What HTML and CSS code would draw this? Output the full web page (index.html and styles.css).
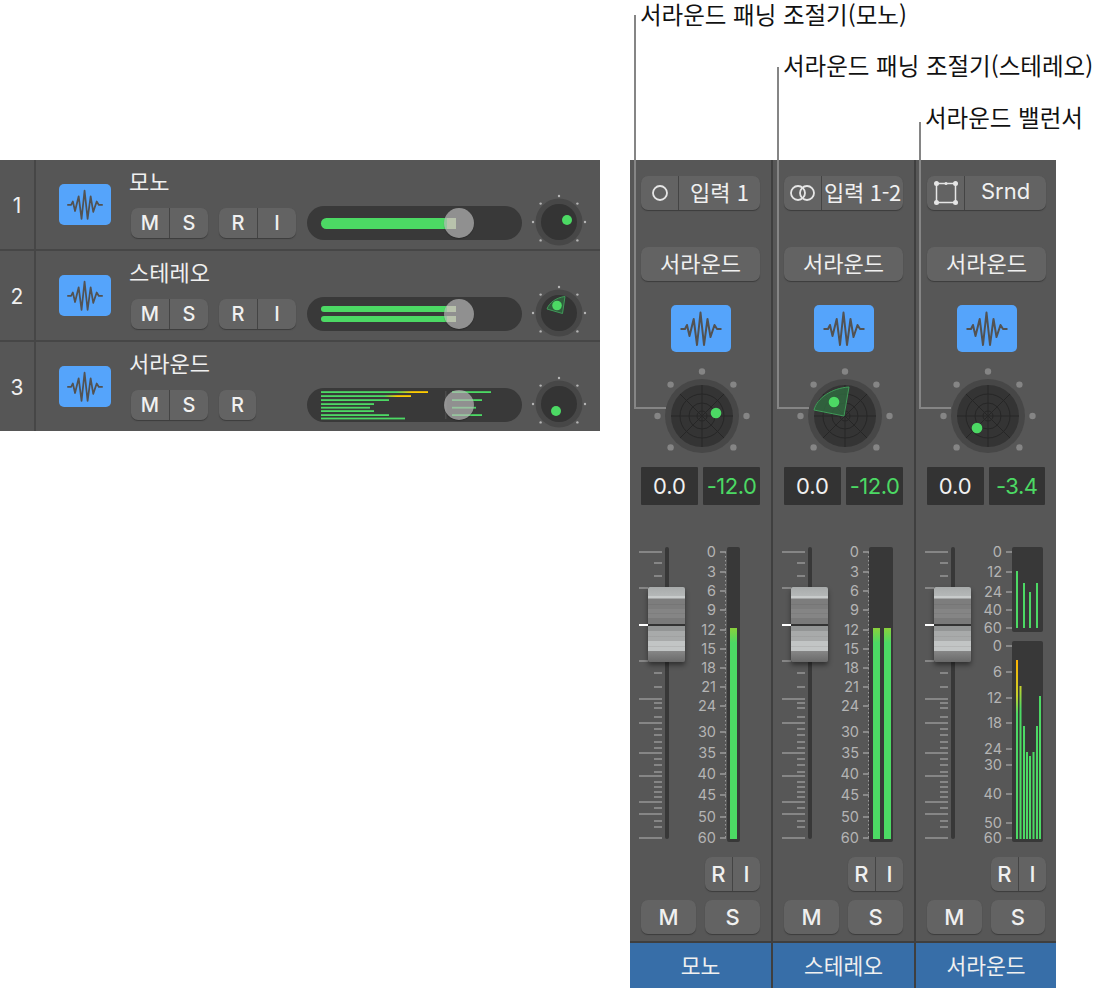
FILE: index.html
```html
<!DOCTYPE html>
<html lang="ko">
<head>
    <meta charset="UTF-8">
    <title>서라운드 패닝</title>
    <link rel="stylesheet" href="styles.css">
</head>
<body>
    <!-- shared icons -->
    <svg class="sprite" width="0" height="0">
        <defs>
            <symbol id="wave" viewBox="0 0 60 47">
                <path d="M9.500 24H14l2-4 2.500 11 4.200-17L26 40l3.500-32.500L33 40l3.500-26 3 18 4-12 2.500 4h4.500" fill="none" stroke="#525252" stroke-width="2" stroke-linejoin="round"/>
            </symbol>
            <symbol id="small-knob" viewBox="0 0 60 60">
                <circle cx="30" cy="30" r="23.500" fill="#474747"/>
                <circle cx="30" cy="30" r="18" fill="#343434"/>
                <g fill="#b5b5b5">
                    <circle cx="30" cy="4" r="1.200"/><circle cx="11.600" cy="11.600" r="1.200"/><circle cx="48.400" cy="11.600" r="1.200"/>
                    <circle cx="4" cy="30" r="1.200"/><circle cx="56" cy="30" r="1.200"/><circle cx="11.600" cy="48.400" r="1.200"/>
                    <circle cx="48.400" cy="48.400" r="1.200"/>
                </g>
            </symbol>
            <symbol id="big-knob" viewBox="0 0 100 100">
                <circle cx="50" cy="50" r="37" fill="#474747"/>
                <circle cx="50" cy="50" r="31" fill="#343434"/>
                <g fill="none" stroke="#262626" stroke-width="1">
                    <circle cx="50" cy="50" r="22"/><circle cx="50" cy="50" r="13"/><circle cx="50" cy="50" r="5"/>
                    <path d="M19 50h62M50 19v62M28 28l44 44M72 28l-44 44"/>
                </g>
                <g fill="#858585">
                    <circle cx="50" cy="5.500" r="3.200"/><circle cx="18.600" cy="18.600" r="3.200"/><circle cx="81.400" cy="18.600" r="3.200"/>
                    <circle cx="5.500" cy="50" r="3.200"/><circle cx="94.500" cy="50" r="3.200"/><circle cx="18.600" cy="81.400" r="3.200"/>
                    <circle cx="81.400" cy="81.400" r="3.200"/>
                </g>
            </symbol>
            <symbol id="fader-ticks" viewBox="0 0 60 300">
                <path d="M9 5h23M24 16h8M24 29h8M9 41h9M9 114h9M24 126h8M24 140h8M9 152h23M24 156h8M24 161h8M24 170h8M9 176h23M24 182h8M24 188h8M24 195h8M24 201h8M9 206h23M24 212h8M24 218h8M24 225h8M9 229h23M24 235h8M24 240h8M24 245h8M24 250h8M9 255h23M24 261h8M9 267h23M24 274h8M24 280h8M9 291h23" stroke="#969696" stroke-width="1.400" fill="none"/>
                <rect x="35" y="0" width="4" height="292" rx="2" fill="#383838"/>
            </symbol>
            <linearGradient id="meter-mono" x1="0" x2="0" y1="0" y2="1">
                <stop offset="0" stop-color="#8ad13c"/><stop offset=".07" stop-color="#4cd964"/>
            </linearGradient>
            <linearGradient id="meter-hot" x1="0" x2="0" y1="0" y2="1">
                <stop offset="0" stop-color="#ffb400"/><stop offset=".2" stop-color="#c8d12c"/><stop offset=".3" stop-color="#4cd964"/>
            </linearGradient>
            <linearGradient id="meter-yellow" x1="0" x2="0" y1="0" y2="1">
                <stop offset="0" stop-color="#c8d12c"/><stop offset=".15" stop-color="#4cd964"/>
            </linearGradient>
            <linearGradient id="hot" x1="0" x2="1" y1="0" y2="0">
                <stop offset=".7" stop-color="#4cd964"/><stop offset=".85" stop-color="#ffcc00"/>
            </linearGradient>
        </defs>
    </svg>

    <div class="page">
        <!-- track list -->
        <section class="tracks">
            <div class="track">
                <div class="track-num">1</div>
                <div class="track-icon"><svg width="52" height="41"><use href="#wave"/></svg></div>
                <div class="track-main">
                    <div class="track-name">모노</div>
                    <div class="track-btns">
                        <div class="seg seg-small"><span>M</span><span>S</span></div>
                        <div class="seg seg-small"><span>R</span><span>I</span></div>
                    </div>
                </div>
                <div class="slider">
                    <div class="level-col"><div class="level level-mono"></div></div>
                    <div class="thumb"></div>
                </div>
                <svg class="track-knob" width="60" height="60" viewBox="0 0 60 60">
                    <use href="#small-knob" width="60" height="60"/>
                    <circle cx="38" cy="28" r="5" fill="#4cd964"/>
                </svg>
            </div>
            <div class="track">
                <div class="track-num">2</div>
                <div class="track-icon"><svg width="52" height="41"><use href="#wave"/></svg></div>
                <div class="track-main">
                    <div class="track-name">스테레오</div>
                    <div class="track-btns">
                        <div class="seg seg-small"><span>M</span><span>S</span></div>
                        <div class="seg seg-small"><span>R</span><span>I</span></div>
                    </div>
                </div>
                <div class="slider">
                    <div class="level-col"><div class="level level-st"></div><div class="level level-st"></div></div>
                    <div class="thumb"></div>
                </div>
                <svg class="track-knob" width="60" height="60" viewBox="0 0 60 60">
                    <use href="#small-knob" width="60" height="60"/>
                    <path d="M36 13.500l-2.500 17-15.500-4.500c2-6 9-11.500 18-12.500z" fill="#2f6b40" fill-opacity=".75" stroke="#3f9a58" stroke-width="1"/>
                    <circle cx="28" cy="22.500" r="4.800" fill="#4cd964"/>
                </svg>
            </div>
            <div class="track">
                <div class="track-num">3</div>
                <div class="track-icon"><svg width="52" height="41"><use href="#wave"/></svg></div>
                <div class="track-main">
                    <div class="track-name">서라운드</div>
                    <div class="track-btns">
                        <div class="seg seg-small"><span>M</span><span>S</span></div>
                        <div class="seg seg-small seg-one"><span>R</span></div>
                    </div>
                </div>
                <div class="slider">
                    <svg class="surround-lines" width="215" height="33" viewBox="0 0 215 33">
                        <g fill="#4cd964">
                            <rect x="14" y="3.200" width="107" height="1.800" fill="url(#hot)"/>
                            <rect x="14" y="7.200" width="90" height="1.800" fill="url(#hot)"/>
                            <rect x="14" y="11.200" width="68" height="1.800"/>
                            <rect x="14" y="15.200" width="53" height="1.800"/>
                            <rect x="14" y="18.800" width="49" height="1.800"/>
                            <rect x="14" y="22.200" width="53" height="1.800"/>
                            <rect x="14" y="26.200" width="68" height="1.800"/>
                            <rect x="14" y="29.600" width="84" height="1.800"/>
                            <rect x="145" y="3.200" width="39" height="1.800"/>
                            <rect x="145" y="11.200" width="30" height="1.800"/>
                            <rect x="145" y="18.800" width="24" height="1.800"/>
                            <rect x="145" y="26.200" width="30" height="1.800"/>
                        </g>
                        <rect x="138" y="3" width="1.500" height="28" fill="#4a4a4a"/>
                    </svg>
                    <div class="thumb"></div>
                </div>
                <svg class="track-knob" width="60" height="60" viewBox="0 0 60 60">
                    <use href="#small-knob" width="60" height="60"/>
                    <circle cx="27" cy="37" r="5" fill="#4cd964"/>
                </svg>
            </div>
        </section>

        <!-- mixer channels -->
        <section class="mixer">
            <div class="strip">
                <div class="strip-body">
                    <div class="seg seg-io">
                        <span class="io-icon"><svg width="18" height="18" viewBox="0 0 18 18"><circle cx="9" cy="9" r="7" fill="none" stroke="#e6e6e6" stroke-width="1.800"/></svg></span>
                        <span class="io-label">입력 1</span>
                    </div>
                    <div class="btn-wide">서라운드</div>
                    <div class="strip-icon"><svg width="60" height="47"><use href="#wave"/></svg></div>
                    <svg class="strip-knob" width="100" height="100" viewBox="0 0 100 100">
                        <use href="#big-knob" width="100" height="100"/>
                        <circle cx="64" cy="47" r="5.300" fill="#4cd964"/>
                    </svg>
                    <div class="readouts"><div class="readout">0.0</div><div class="readout readout-level">-12.0</div></div>
                    <svg class="fader" width="120" height="300" viewBox="0 0 120 300">
                        <use href="#fader-ticks" y="2" width="60" height="300"/>
                        <rect x="97" y="2" width="13" height="295" rx="2" fill="#383838"/>
                        <rect x="100" y="83" width="7" height="211" fill="url(#meter-mono)"/>
                        <path d="M95.500 7v286" stroke="#9a9a9a" stroke-dasharray="1.500 2.500"/>
                        <path d="M90 7h6M90 27h6M90 46h6M90 65h6M90 85h6M90 104h6M90 123h6M90 142h6M90 161h6M90 187h6M90 208h6M90 229h6M90 250h6M90 272h6M90 293h6" stroke="#9a9a9a" stroke-width="1.300"/>
                        <g class="scale">
                            <text x="86" y="12">0</text><text x="86" y="32">3</text><text x="86" y="51">6</text><text x="86" y="70">9</text><text x="86" y="90">12</text><text x="86" y="109">15</text><text x="86" y="128">18</text><text x="86" y="147">21</text><text x="86" y="166">24</text><text x="86" y="192">30</text><text x="86" y="213">35</text><text x="86" y="234">40</text><text x="86" y="255">45</text><text x="86" y="277">50</text><text x="86" y="298">60</text>
                        </g>
                    </svg>
                    <div class="fader-cap"></div>
                    <div class="strip-btns">
                        <div class="seg seg-ri"><span>R</span><span>I</span></div>
                        <div class="ms-row"><div class="btn-ms">M</div><div class="btn-ms">S</div></div>
                    </div>
                </div>
                <div class="strip-name">모노</div>
            </div>
            <div class="strip">
                <div class="strip-body">
                    <div class="seg seg-io">
                        <span class="io-icon"><svg width="30" height="18" viewBox="0 0 30 18"><circle cx="10" cy="9" r="7" fill="none" stroke="#e6e6e6" stroke-width="1.800"/><circle cx="19" cy="9" r="7" fill="none" stroke="#e6e6e6" stroke-width="1.800"/></svg></span>
                        <span class="io-label">입력 1-2</span>
                    </div>
                    <div class="btn-wide">서라운드</div>
                    <div class="strip-icon"><svg width="60" height="47"><use href="#wave"/></svg></div>
                    <svg class="strip-knob" width="100" height="100" viewBox="0 0 100 100">
                        <use href="#big-knob" width="100" height="100"/>
                        <path d="M54 21l-5 29-30-6c3-12 18-22 35-23z" fill="#2f6b40" fill-opacity=".8" stroke="#3f9a58" stroke-width="1"/>
                        <circle cx="39" cy="36" r="5.300" fill="#4cd964"/>
                    </svg>
                    <div class="readouts"><div class="readout">0.0</div><div class="readout readout-level">-12.0</div></div>
                    <svg class="fader" width="120" height="300" viewBox="0 0 120 300">
                        <use href="#fader-ticks" y="2" width="60" height="300"/>
                        <rect x="96" y="2" width="24" height="295" rx="2" fill="#383838"/>
                        <rect x="100" y="83" width="7" height="211" fill="url(#meter-mono)"/>
                        <rect x="111" y="83" width="7" height="211" fill="url(#meter-mono)"/>
                        <path d="M95.500 7v286" stroke="#9a9a9a" stroke-dasharray="1.500 2.500"/>
                        <path d="M90 7h6M90 27h6M90 46h6M90 65h6M90 85h6M90 104h6M90 123h6M90 142h6M90 161h6M90 187h6M90 208h6M90 229h6M90 250h6M90 272h6M90 293h6" stroke="#9a9a9a" stroke-width="1.300"/>
                        <g class="scale">
                            <text x="86" y="12">0</text><text x="86" y="32">3</text><text x="86" y="51">6</text><text x="86" y="70">9</text><text x="86" y="90">12</text><text x="86" y="109">15</text><text x="86" y="128">18</text><text x="86" y="147">21</text><text x="86" y="166">24</text><text x="86" y="192">30</text><text x="86" y="213">35</text><text x="86" y="234">40</text><text x="86" y="255">45</text><text x="86" y="277">50</text><text x="86" y="298">60</text>
                        </g>
                    </svg>
                    <div class="fader-cap"></div>
                    <div class="strip-btns">
                        <div class="seg seg-ri"><span>R</span><span>I</span></div>
                        <div class="ms-row"><div class="btn-ms">M</div><div class="btn-ms">S</div></div>
                    </div>
                </div>
                <div class="strip-name">스테레오</div>
            </div>
            <div class="strip strip-last">
                <div class="strip-body">
                    <div class="seg seg-io">
                        <span class="io-icon"><svg width="26" height="26" viewBox="0 0 26 26"><path d="M3.500 3.500h19v19h-19z" fill="none" stroke="#e6e6e6" stroke-width="1.500"/><g fill="#e6e6e6"><circle cx="3.500" cy="3.500" r="2.500"/><circle cx="22.500" cy="3.500" r="2.500"/><circle cx="3.500" cy="22.500" r="2.500"/><circle cx="22.500" cy="22.500" r="2.500"/><circle cx="13" cy="3.500" r="1.500"/></g></svg></span>
                        <span class="io-label">Srnd</span>
                    </div>
                    <div class="btn-wide">서라운드</div>
                    <div class="strip-icon"><svg width="60" height="47"><use href="#wave"/></svg></div>
                    <svg class="strip-knob" width="100" height="100" viewBox="0 0 100 100">
                        <use href="#big-knob" width="100" height="100"/>
                        <circle cx="39" cy="62" r="5.300" fill="#4cd964"/>
                    </svg>
                    <div class="readouts"><div class="readout">0.0</div><div class="readout readout-level">-3.4</div></div>
                    <svg class="fader" width="120" height="300" viewBox="0 0 120 300">
                        <use href="#fader-ticks" y="2" width="60" height="300"/>
                        <rect x="96" y="2" width="31" height="85" rx="2" fill="#383838"/>
                        <rect x="96" y="96" width="31" height="201" rx="2" fill="#383838"/>
                        <g fill="#4cd964">
                            <rect x="100" y="26" width="2" height="57"/><rect x="107" y="38" width="2" height="45"/><rect x="113" y="47" width="2" height="36"/><rect x="120" y="38" width="2" height="45"/>
                            <rect x="100" y="115" width="2" height="179" fill="url(#meter-hot)"/><rect x="103.500" y="141" width="2" height="153" fill="url(#meter-yellow)"/><rect x="107" y="181" width="2" height="113"/><rect x="110" y="207" width="2" height="87"/><rect x="113" y="211" width="2" height="83"/><rect x="116.500" y="207" width="2" height="87"/><rect x="120" y="181" width="2" height="113"/><rect x="123" y="151" width="2" height="143"/>
                        </g>
                        <path d="M90 7h6M90 27h6M90 47h6M90 65h6M90 83h6M90 101h6M90 127h6M90 153h6M90 178h6M90 204h6M90 220h6M90 249h6M90 278h6M90 293h6" stroke="#9a9a9a" stroke-width="1.300"/>
                        <g class="scale">
                            <text x="86" y="12">0</text><text x="86" y="32">12</text><text x="86" y="52">24</text><text x="86" y="70">40</text><text x="86" y="88">60</text><text x="86" y="106">0</text><text x="86" y="132">6</text><text x="86" y="158">12</text><text x="86" y="183">18</text><text x="86" y="209">24</text><text x="86" y="225">30</text><text x="86" y="254">40</text><text x="86" y="283">50</text><text x="86" y="298">60</text>
                        </g>
                    </svg>
                    <div class="fader-cap"></div>
                    <div class="strip-btns">
                        <div class="seg seg-ri"><span>R</span><span>I</span></div>
                        <div class="ms-row"><div class="btn-ms">M</div><div class="btn-ms">S</div></div>
                    </div>
                </div>
                <div class="strip-name">서라운드</div>
            </div>
        </section>

        <!-- callouts sit over the mixer -->
        <div class="callout callout-1"><span class="callout-text">서라운드 패닝 조절기(모노)</span></div>
        <div class="callout callout-2"><span class="callout-text">서라운드 패닝 조절기(스테레오)</span></div>
        <div class="callout callout-3"><span class="callout-text">서라운드 밸런서</span></div>
    </div>
</body>
</html>
```

FILE: styles.css
```css
* {
    box-sizing: border-box;
}
html, body {
    margin: 0;
    background: #fff;
}
body {
    font-family: "Noto Sans CJK KR", Inter, sans-serif;
    color: #f0f0f0;
}
.sprite {
    display: block;
    height: 0;
}
.page {
    position: relative;
    width: 1109px;
    height: 990px;
    display: flex;
    align-items: flex-start;
    padding-top: 160px;
}

/* track list */
.tracks {
    width: 600px;
    height: 271px;
    margin-right: 30px;
    background: #565656;
}
.track {
    height: 91px;
    display: flex;
    align-items: flex-start;
    border-bottom: 2px solid #464646;
}
.track:last-child {
    height: 89px;
    border-bottom: none;
}
.track-num {
    width: 36px;
    height: 100%;
    border-right: 2px solid #464646;
    font-family: Inter, sans-serif;
    font-size: 21px;
    line-height: 92px;
    text-align: center;
}
.track-icon {
    width: 52px;
    height: 41px;
    margin: 24px 0 0 23px;
    background: #55a4fb;
    border-radius: 5px;
}
.track-icon svg, .strip-icon svg {
    display: block;
}
.track-main {
    width: 177px;
    margin-left: 20px;
}
.track-name {
    font-size: 22px;
    line-height: 30px;
    height: 48px;
    padding-top: 5px;
    margin-left: -2px;
    white-space: nowrap;
}
.track-btns {
    display: flex;
    gap: 11px;
}
.slider {
    position: relative;
    width: 215px;
    height: 34px;
    margin: 46px 0 0 -1px;
    background: #393939;
    border-radius: 17px;
}
.level-col {
    display: flex;
    flex-direction: column;
    justify-content: center;
    gap: 4px;
    height: 100%;
    width: 135px;
    margin-left: 14px;
}
.level {
    background: linear-gradient(to right, #4cd964 93%, #b5d48e 93%);
    border-radius: 6px 0 0 6px;
}
.level-mono {
    height: 11px;
}
.level-st {
    height: 6px;
}
.surround-lines {
    display: block;
}
.thumb {
    position: absolute;
    left: 137px;
    top: 2px;
    width: 30px;
    height: 30px;
    border-radius: 50%;
    background: rgba(186, 186, 186, 0.68);
    box-shadow: 0 1px 1px rgba(0, 0, 0, 0.25);
}
.track-knob {
    margin: 32px 0 0 7px;
}

/* segmented buttons */
.seg {
    display: flex;
    background: #636363;
    border-radius: 7px;
    box-shadow: 0 1px 1px #3c3c3c;
    font-family: Inter, sans-serif;
    font-weight: 500;
}
.seg span + span {
    border-left: 1px solid #444;
}
.seg-small {
    width: 77px;
    height: 30px;
    font-size: 20px;
    line-height: 30px;
    text-align: center;
}
.seg-small span {
    flex: 1;
}
.seg-one {
    width: 37px;
}

/* mixer channels */
.mixer {
    display: flex;
    gap: 2px;
    background: #3f3f3f;
    height: 828px;
}
.strip {
    width: 141px;
    display: flex;
    flex-direction: column;
    height: 100%;
}
.strip-last {
    width: 140px;
}
.strip-body {
    position: relative;
    flex: 1;
    background: #575757;
    padding: 16px 11px 0;
}
.seg-io {
    width: 119px;
    height: 34px;
    align-items: stretch;
    font-weight: 400;
}
.io-icon {
    flex: none;
    width: 37px;
    display: flex;
    align-items: center;
    justify-content: center;
}
.io-label {
    flex: 1;
    text-align: center;
    font-family: "Noto Sans CJK KR", Inter, sans-serif;
    font-size: 22px;
    line-height: 31px;
    white-space: nowrap;
}
.strip:nth-child(2) .io-label {
    letter-spacing: -0.3px;
}
.strip-last .io-label {
    font-family: Inter, sans-serif;
}
.btn-wide {
    width: 119px;
    height: 34px;
    margin-top: 37px;
    background: #636363;
    border-radius: 7px;
    box-shadow: 0 1px 1px #3c3c3c;
    font-size: 22px;
    line-height: 31px;
    text-align: center;
}
.strip-icon {
    width: 60px;
    height: 47px;
    margin: 24px 0 0 30px;
    background: #55a4fb;
    border-radius: 5px;
}
.strip-knob {
    display: block;
    margin: 14px 0 0 11px;
}
.readouts {
    display: flex;
    gap: 5px;
    margin-top: 1px;
}
.readout {
    width: 57px;
    height: 38px;
    background: #333;
    border-radius: 1px;
    font-family: Inter, sans-serif;
    font-size: 22px;
    line-height: 38px;
    text-align: center;
    white-space: nowrap;
}
.readout-level {
    color: #4cd964;
    letter-spacing: -0.5px;
}
.fader {
    display: block;
    margin: 40px 0 0 -11px;
    overflow: visible;
}
.scale text {
    font-family: Inter, sans-serif;
    font-size: 14.500px;
    fill: #b4b4b4;
    text-anchor: end;
}
.fader-cap {
    position: absolute;
    left: 18px;
    top: 427px;
    width: 37px;
    height: 75px;
    border-radius: 2px;
    box-shadow: 0 3px 5px rgba(0, 0, 0, 0.45);
    background: linear-gradient(to bottom,
        #a8abab 0, #b5b8b8 9px, #c8cbcb 9px, #c8cbcb 11px,
        #7d7d7d 12px, #7d7d7d 17px, #6f6f6f 17px, #7d7d7d 18px, #7d7d7d 22px,
        #858585 22px, #858585 26px, #777 26px, #858585 27px, #858585 31px,
        #7a7a7a 31px, #7a7a7a 37px, #333 37px, #333 39px,
        #939595 39px, #939595 44px, #a8aaaa 44px, #a8aaaa 49px, #999 49px, #a8aaaa 50px, #a8aaaa 54px,
        #c2c5c5 54px, #c2c5c5 59px, #aaa 59px, #c2c5c5 60px, #c2c5c5 64px,
        #868686 64px, #6a6a6a 75px);
}
.fader-cap::before {
    content: "";
    position: absolute;
    left: -9px;
    top: 37px;
    width: 9px;
    height: 2px;
    background: #fff;
}
.strip-btns {
    margin-top: 12px;
}
.seg-ri {
    width: 55px;
    height: 34px;
    margin-left: 64px;
    font-size: 22px;
    line-height: 34px;
    text-align: center;
}
.seg-ri span {
    flex: 1;
}
.ms-row {
    display: flex;
    gap: 9px;
    margin-top: 9px;
}
.btn-ms {
    width: 55px;
    height: 34px;
    background: #636363;
    border-radius: 7px;
    box-shadow: 0 1px 1px #3c3c3c;
    font-family: Inter, sans-serif;
    font-weight: 500;
    font-size: 22px;
    line-height: 34px;
    text-align: center;
}
.strip-name {
    height: 45px;
    margin-top: 2px;
    background: #376ea8;
    font-size: 21.500px;
    line-height: 43px;
    text-align: center;
}

/* callouts */
.callout {
    position: absolute;
    border-left: 2px solid #858585;
    border-bottom: 2px solid #858585;
    width: 32px;
}
.callout-text {
    position: absolute;
    left: 4px;
    font-size: 23.500px;
    line-height: 28px;
    color: #111;
    white-space: nowrap;
}
.callout-1 {
    left: 634px;
    top: 15px;
    height: 394px;
}
.callout-1 .callout-text {
    top: -15px;
}
.callout-2 {
    left: 777px;
    top: 67px;
    height: 342px;
}
.callout-2 .callout-text {
    top: -16px;
}
.callout-3 {
    left: 919px;
    top: 122px;
    height: 287px;
}
.callout-3 .callout-text {
    top: -19px;
}
```
